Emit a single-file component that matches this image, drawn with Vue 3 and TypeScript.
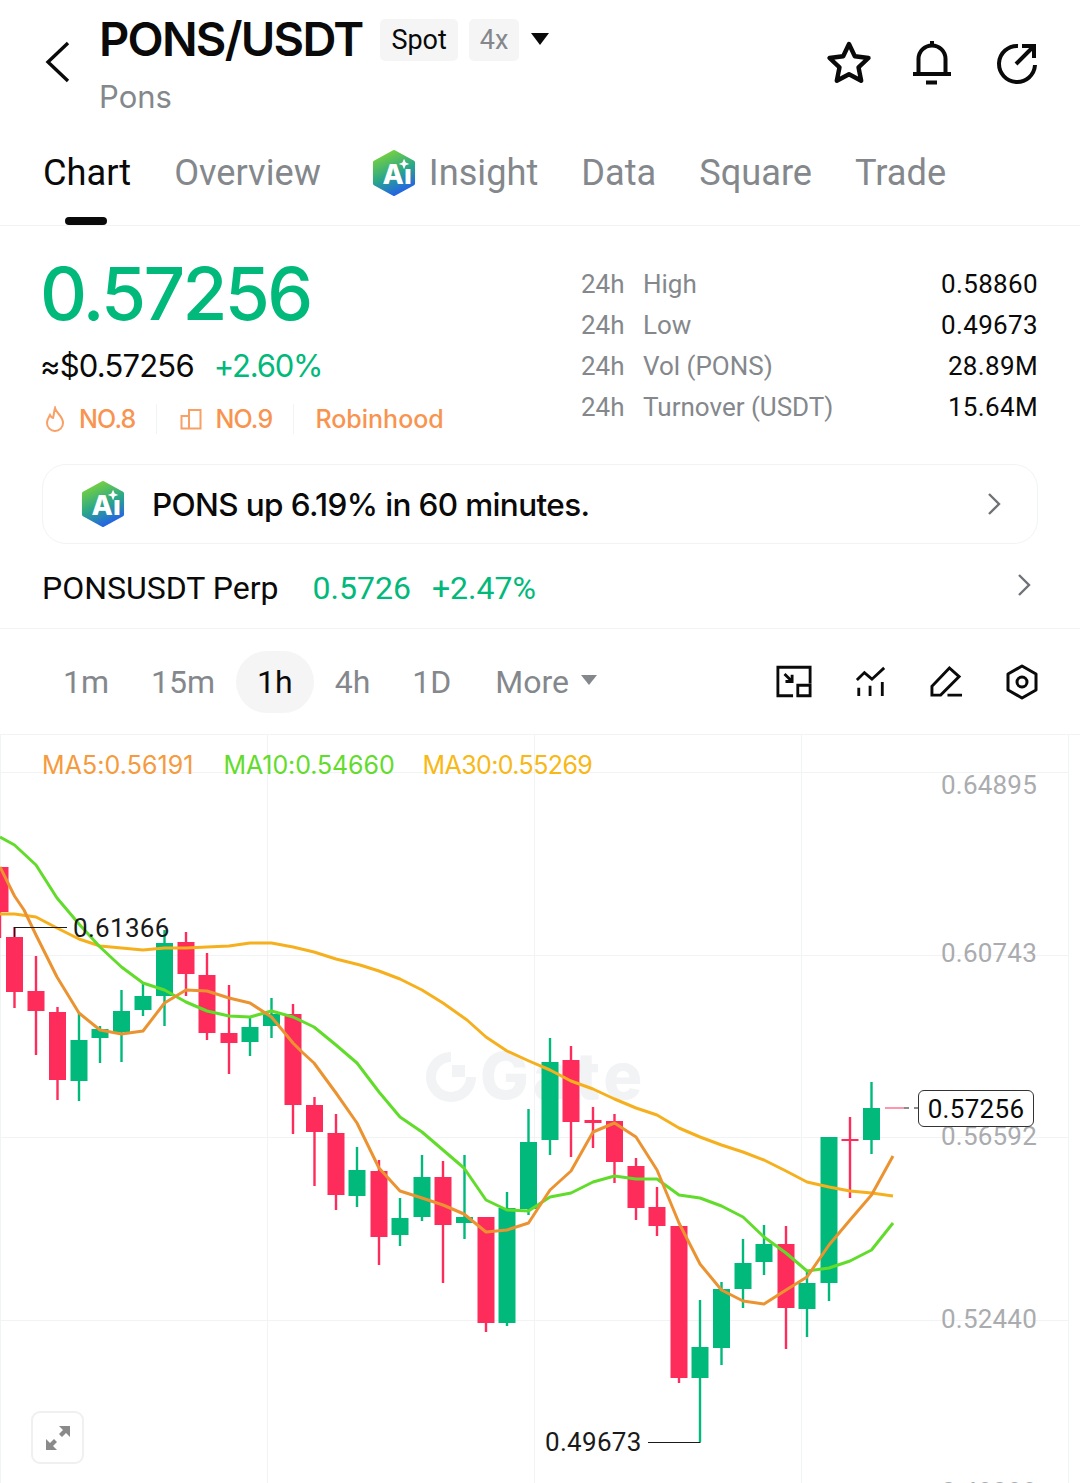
<script setup lang="ts">
type Candle = [number, number, number, number, number, 'r' | 'g']

const tabs = ['Overview', 'Insight', 'Data', 'Square', 'Trade']
const stats = [
  ['High', '0.58860'],
  ['Low', '0.49673'],
  ['Vol (PONS)', '28.89M'],
  ['Turnover (USDT)', '15.64M'],
]
const frames = ['1m', '15m', '1h', '4h', '1D']

// x, wick top, wick bottom, body top, body bottom, colour
const candles: Candle[] = [
  [0, 867, 938, 867, 912, 'r'],
  [14.5, 927, 1008, 937, 992, 'r'],
  [36, 956, 1055, 991, 1011, 'r'],
  [57.5, 1007, 1100, 1012, 1080, 'r'],
  [79, 1013, 1101, 1040, 1081, 'g'],
  [100, 1026, 1063, 1029, 1038, 'g'],
  [121.5, 990, 1062, 1011, 1032, 'g'],
  [143, 983, 1016, 996, 1010, 'g'],
  [164.5, 930, 1026, 943, 996, 'g'],
  [186, 932, 996, 942, 974, 'r'],
  [207, 953, 1040, 975, 1033, 'r'],
  [229, 985, 1074, 1033, 1043, 'r'],
  [250, 1017, 1056, 1027, 1042, 'g'],
  [271.5, 998, 1038, 1014, 1026, 'g'],
  [293, 1004, 1134, 1014, 1105, 'r'],
  [314.5, 1097, 1186, 1105, 1132, 'r'],
  [336, 1114, 1210, 1133, 1195, 'r'],
  [357, 1147, 1207, 1170, 1196, 'g'],
  [379, 1160, 1265, 1171, 1237, 'r'],
  [400, 1198, 1246, 1218, 1235, 'g'],
  [422, 1155, 1221, 1177, 1217, 'g'],
  [443, 1161, 1283, 1177, 1225, 'r'],
  [464.5, 1155, 1239, 1217, 1223, 'g'],
  [486, 1217, 1332, 1217, 1323, 'r'],
  [507, 1192, 1326, 1208, 1323, 'g'],
  [528.5, 1109, 1215, 1142, 1209, 'g'],
  [550, 1038, 1155, 1062, 1140, 'g'],
  [571, 1046, 1157, 1060, 1122, 'r'],
  [593, 1107, 1148, 1120, 1123, 'r'],
  [614.5, 1114, 1183, 1121, 1162, 'r'],
  [636, 1158, 1220, 1166, 1208, 'r'],
  [657, 1187, 1236, 1207, 1226, 'r'],
  [679, 1226, 1383, 1226, 1378, 'r'],
  [700, 1300, 1442, 1347, 1378, 'g'],
  [721.5, 1282, 1365, 1289, 1348, 'g'],
  [743, 1239, 1308, 1263, 1289, 'g'],
  [764, 1225, 1275, 1244, 1262, 'g'],
  [786, 1226, 1349, 1244, 1308, 'r'],
  [807, 1270, 1337, 1283, 1309, 'g'],
  [829, 1137, 1301, 1137, 1283, 'g'],
  [850, 1117, 1198, 1139, 1141, 'r'],
  [871.5, 1082, 1154, 1108, 1140, 'g'],
]

const ma5 = '0,867 14.5,896 24,910 36,935 57,977 79,1013 100,1030 121.5,1034 143,1031 164.5,1003 186,990 207,991 229,998 250,1003 271.5,1017 293,1043 302,1052 314,1063 336,1093 357,1123 379,1168 400,1191 422,1198 443,1205 464,1214 486,1232 507,1230 528.5,1223 550,1190 571,1171 593,1132 614.5,1123 636,1137 657,1170 679,1223 700,1264 721.5,1290 743,1301 764,1304 786,1290 807,1277 829,1245 850,1220 871.5,1195 893,1156'
const ma10 = '0,837 14.5,845 36,865 57,898 79,924 100,947 121.5,967 143,983 164.5,990 186,1002 207,1011 229,1016 250,1017 271.5,1011 293,1017 314,1027 336,1045 357,1063 379,1092 400,1117 422,1132 443,1150 464,1168 486,1200 507,1210 528.5,1211 550,1197 571,1193 593,1182 614.5,1176 636,1179 657,1179 679,1195 700,1198 721.5,1206 743,1217 764,1237 786,1253 807,1271 829,1268 850,1261 871.5,1250 893,1223'
const ma30 = '0,914 14.5,914 36,917 57,928 79,939 100,946 121.5,948 143,950 164.5,948 186,948 207,947 229,946 250,943 271.5,943 293,947 314,952 336,959 360,965 379,971 400,979 422,990 443,1003 467,1020 486,1037 507,1051 529,1061 550,1070 571,1081 593,1089 614.5,1099 636,1108 657,1115 679,1128 700,1137 721.5,1145 743,1152 764,1160 786,1171 807,1182 829,1187 850,1191 871.5,1193 893,1196'

const gridY = [772, 955, 1137, 1320]
const gridX = [0, 267, 534, 801, 1068]
const axis: [string, number][] = [
  ['0.64895', 794],
  ['0.60743', 962],
  ['0.56592', 1145],
  ['0.52440', 1328],
  ['0.48288', 1501],
]
</script>

<template>
  <div class="page">
    <header class="head">
      <svg class="back" width="26" height="42" viewBox="0 0 26 42">
        <path d="M24 2 L4 21 L24 40" fill="none" stroke="#0a0a0a" stroke-width="3.4" />
      </svg>
      <div class="title-col">
        <div class="title-row">
          <span class="pair">PONS/USDT</span>
          <span class="chip">Spot</span>
          <span class="chip chip-grey">4x</span>
          <span class="caret"></span>
        </div>
        <div class="coin">Pons</div>
      </div>
      <div class="head-icons">
        <svg width="46" height="46" viewBox="0 0 46 46">
          <path d="M23 4 L28.8 16.2 L42.5 18 L32.5 27.3 L35.2 40.8 L23 34.2 L10.8 40.8 L13.5 27.3 L3.5 18 L17.2 16.2 Z" fill="none" stroke="#0a0a0a" stroke-width="4.4" stroke-linejoin="round" />
        </svg>
        <svg class="bell" width="40" height="46" viewBox="0 0 40 46">
          <path d="M1 34 H39 M6.5 34 V19 A13.5 13.5 0 0 1 33.5 19 V34 M20 1 V6 M14 42.5 H25" fill="none" stroke="#0a0a0a" stroke-width="4" />
        </svg>
        <svg width="42" height="44" viewBox="0 0 42 44">
          <path d="M22 5 A18 18 0 1 0 39 24 M20 23 L37 6 M26 5 H38 V17" fill="none" stroke="#0a0a0a" stroke-width="4" />
        </svg>
      </div>
    </header>

    <nav class="tabs">
      <span class="tab tab-on">Chart</span>
      <span v-for="t in tabs" :key="t" class="tab" :class="{ 'tab-ai': t === 'Insight' }">
        <svg v-if="t === 'Insight'" class="ai" width="44" height="48" viewBox="0 0 46 50">
          <defs>
            <linearGradient id="aiA" x1="0.2" y1="0" x2="0.6" y2="1">
              <stop offset="0" stop-color="#7bd43a" />
              <stop offset="0.55" stop-color="#2aa68a" />
              <stop offset="1" stop-color="#2463e6" />
            </linearGradient>
          </defs>
          <path d="M23 3 L43 14 V36 L23 47 L3 36 V14 Z" fill="url(#aiA)" stroke="url(#aiA)" stroke-width="4" stroke-linejoin="round" />
          <text x="11" y="36" class="ai-text">Aı</text>
          <path d="M33.500 10 L35.200 14 L39 15.500 L35.200 17 L33.500 21 L31.800 17 L28 15.500 L31.800 14 Z" fill="#fff" />
        </svg>
        {{ t }}
      </span>
    </nav>

    <section class="stats">
      <div class="stats-left">
        <div class="price">0.57256</div>
        <div class="sub-price">
          <span class="usd">≈$0.57256</span>
          <span class="pct">+2.60%</span>
        </div>
        <div class="ranks">
          <span class="rank">
            <svg width="22" height="26" viewBox="0 0 22 26">
              <path d="M11 2 C12 7 19 10 19 17 A8 8 0 0 1 3 17 C3 13 5 11 6 9 C7 11 8 12 9 12 C10 9 10 5 11 2 Z" fill="none" stroke="#f8a066" stroke-width="2" />
            </svg>
            NO.8
          </span>
          <span class="rank">
            <svg width="22" height="22" viewBox="0 0 22 22">
              <path d="M1.500 8 H9 V20.500 H1.500 Z M9 2 H20.500 V20.500 H9 Z" fill="none" stroke="#f8a066" stroke-width="2" />
            </svg>
            NO.9
          </span>
          <span class="rank rank-last">Robinhood</span>
        </div>
      </div>
      <div class="stats-right">
        <div v-for="s in stats" :key="s[0]" class="stat-row">
          <span class="h24">24h</span>
          <span class="stat-name">{{ s[0] }}</span>
          <span class="stat-val">{{ s[1] }}</span>
        </div>
      </div>
    </section>

    <div class="alert">
      <svg width="44" height="48" viewBox="0 0 46 50">
        <defs>
          <linearGradient id="aiB" x1="0.2" y1="0" x2="0.6" y2="1">
            <stop offset="0" stop-color="#7bd43a" />
            <stop offset="0.55" stop-color="#2aa68a" />
            <stop offset="1" stop-color="#2463e6" />
          </linearGradient>
        </defs>
        <path d="M23 3 L43 14 V36 L23 47 L3 36 V14 Z" fill="url(#aiB)" stroke="url(#aiB)" stroke-width="4" stroke-linejoin="round" />
        <text x="11" y="36" class="ai-text">Aı</text>
        <path d="M33.500 10 L35.200 14 L39 15.500 L35.200 17 L33.500 21 L31.800 17 L28 15.500 L31.800 14 Z" fill="#fff" />
      </svg>
      <span class="alert-text">PONS up 6.19% in 60 minutes.</span>
      <svg class="chev" width="14" height="24" viewBox="0 0 14 24">
        <path d="M2 2 L12 12 L2 22" fill="none" stroke="#6f7378" stroke-width="2.400" />
      </svg>
    </div>

    <div class="perp">
      <span class="perp-name">PONSUSDT Perp</span>
      <span class="perp-val">0.5726</span>
      <span class="perp-val">+2.47%</span>
      <svg class="chev perp-chev" width="14" height="24" viewBox="0 0 14 24">
        <path d="M2 2 L12 12 L2 22" fill="none" stroke="#6f7378" stroke-width="2.400" />
      </svg>
    </div>

    <div class="toolbar">
      <div class="frames">
        <span v-for="f in frames" :key="f" class="frame" :class="{ 'frame-on': f === '1h' }">{{ f }}</span>
        <span class="frame frame-more">More<i class="more-caret"></i></span>
      </div>
      <div class="tools">
        <svg width="36" height="33" viewBox="0 0 38 34">
          <path d="M18 32 H2 V2 H36 V19 M9 9 L17 17 M10 17 H17 V10 M23 21 H36 V32 H23 Z" fill="none" stroke="#0a0a0a" stroke-width="3" />
        </svg>
        <svg width="32" height="32" viewBox="0 0 34 34">
          <path d="M2 15 L10 7 L18 14 L31 2 M4 23 V32 M16 21 V32 M29 17 V32" fill="none" stroke="#0a0a0a" stroke-width="3" />
        </svg>
        <svg width="33" height="33" viewBox="0 0 34 34">
          <path d="M2 31 V22 L20 3 L30 12 L11 31 Z M18 31 H33" fill="none" stroke="#0a0a0a" stroke-width="3" />
        </svg>
        <svg width="32" height="36" viewBox="0 0 32 36">
          <path d="M16 2 L30 10 V26 L16 34 L2 26 V10 Z" fill="none" stroke="#0a0a0a" stroke-width="3" stroke-linejoin="round" />
          <circle cx="16" cy="18" r="5" fill="none" stroke="#0a0a0a" stroke-width="3" />
        </svg>
      </div>
    </div>

    <div class="chart">
      <svg class="plot" width="1080" height="748" viewBox="0 735 1080 748">
        <line v-for="y in gridY" :key="'y' + y" x1="0" x2="1068" :y1="y + 0.5" :y2="y + 0.5" stroke="#f2f3f5" />
        <line v-for="x in gridX" :key="'x' + x" :x1="x + 0.5" :x2="x + 0.5" y1="735" y2="1483" stroke="#f2f3f5" />

        <!-- watermark -->
        <path d="M451 1057 A20 20 0 1 0 471 1077" fill="none" stroke="#f1f3f4" stroke-width="10" />
        <rect x="452" y="1065" width="13" height="12" fill="#f1f3f4" />
        <text x="480" y="1099" class="mark">Gate</text>

        <g v-for="(c, i) in candles" :key="i">
          <line :x1="c[0]" :x2="c[0]" :y1="c[1]" :y2="c[2]" :stroke="c[5] === 'r' ? '#fe2c5b' : '#00b97a'" stroke-width="2.400" />
          <rect :x="c[0] - 8.500" :y="c[3]" width="17" :height="c[4] - c[3]" :fill="c[5] === 'r' ? '#fe2c5b' : '#00b97a'" />
        </g>

        <polyline :points="ma30" fill="none" stroke="#f6b01e" stroke-width="3" stroke-linejoin="round" />
        <polyline :points="ma10" fill="none" stroke="#62dc2b" stroke-width="3" stroke-linejoin="round" />
        <polyline :points="ma5" fill="none" stroke="#ec9331" stroke-width="3" stroke-linejoin="round" />

        <path d="M14.500 937 V927.500 H67" fill="none" stroke="#1a1a1a" stroke-width="1.200" />
        <text x="73" y="937" class="extreme">0.61366</text>
        <path d="M700.500 1442.500 H648" fill="none" stroke="#1a1a1a" stroke-width="1.200" />
        <text x="545" y="1451" class="extreme">0.49673</text>

        <text v-for="a in axis" :key="a[0]" x="1037" :y="a[1]" text-anchor="end" class="axis">{{ a[0] }}</text>

        <line x1="885" x2="904" y1="1108" y2="1108" stroke="#fe2c5b" stroke-width="1" />
        <line x1="904" x2="918" y1="1108" y2="1108" stroke="#1a1a1a" stroke-width="1.200" stroke-dasharray="5 5" />
      </svg>

      <div class="legend">
        <span class="ma5">MA5:0.56191</span>
        <span class="ma10">MA10:0.54660</span>
        <span class="ma30">MA30:0.55269</span>
      </div>

      <div class="last-price">0.57256</div>

      <div class="expand">
        <svg width="26" height="26" viewBox="0 0 26 26">
          <path d="M14 1 H25 V12 L21 8 L17 12 L14 9 L18 5 Z M12 25 H1 V14 L5 18 L9 14 L12 17 L8 21 Z" fill="#8a8a8a" />
        </svg>
      </div>
    </div>
  </div>
</template>

<style>
html,
body {
  margin: 0;
  background: #fff;
}
</style>

<style scoped>
.page {
  width: 1080px;
  height: 1483px;
  overflow: hidden;
  background: #fff;
  color: #0a0a0a;
  font-family: Roboto, sans-serif;
}

.head {
  display: flex;
  height: 125px;
  box-sizing: border-box;
  padding: 15px 42px 0 44px;
}

.back {
  margin: 26px 29px 0 0;
}

.title-col {
  flex: 1;
}

.title-row {
  display: flex;
  align-items: center;
  height: 50px;
}

.pair {
  font-family: Inter, sans-serif;
  font-size: 47px;
  font-weight: 600;
  letter-spacing: -1.75px;
  margin: 0 18px 3px 0;
}

.chip {
  background: #f5f5f6;
  border-radius: 5px;
  font-size: 27px;
  line-height: 42px;
  padding: 0 11px;
  margin-right: 11px;
}

.chip-grey {
  color: #84888c;
}

.caret {
  width: 0;
  height: 0;
  margin: 0 0 3px 1px;
  border-left: 9px solid transparent;
  border-right: 9px solid transparent;
  border-top: 12px solid #0a0a0a;
}

.coin {
  font-family: Inter, sans-serif;
  font-size: 31px;
  color: #84888c;
  margin-top: 13px;
}

.head-icons {
  display: flex;
  gap: 42px;
  align-items: center;
  height: 46px;
  margin-top: 25px;
}

.bell {
  margin: 0 2px 0 -2px;
}

.tabs {
  display: flex;
  align-items: center;
  gap: 43px;
  height: 101px;
  box-sizing: border-box;
  padding: 0 0 5px 43px;
  border-bottom: 1px solid #f2f3f5;
  position: relative;
}

.tab {
  font-size: 36.200px;
  color: #84888c;
  display: flex;
  align-items: center;
}

.tab-on {
  color: #0a0a0a;
}

.tab-on::after {
  content: '';
  position: absolute;
  left: 65px;
  bottom: 0;
  width: 42px;
  height: 8px;
  border-radius: 4px;
  background: #0a0a0a;
}

.ai {
  margin: 0 13px 0 8px;
}

.ai-text {
  font-family: Inter, sans-serif;
  font-size: 29px;
  font-weight: 800;
  fill: #fff;
}

.stats {
  display: flex;
  height: 238px;
  box-sizing: border-box;
  padding: 38px 42px 0;
  justify-content: space-between;
}

.price {
  font-family: Inter, sans-serif;
  font-size: 73px;
  font-weight: 500;
  letter-spacing: -2.700px;
  line-height: 60px;
  margin-left: -2px;
  color: #00b97a;
}

.sub-price {
  display: flex;
  gap: 20px;
  margin: 22px 0 0 -2px;
  font-family: Inter, sans-serif;
  font-size: 31px;
  letter-spacing: -0.8px;
  line-height: 40px;
}

.pct {
  color: #00b97a;
  letter-spacing: -1.2px;
}

.ranks {
  display: flex;
  margin-top: 18px;
  font-family: Inter, sans-serif;
  font-size: 25px;
  font-weight: 500;
  color: #f8944f;
  letter-spacing: -0.8px;
  line-height: 30px;
}

.rank {
  display: flex;
  align-items: center;
  gap: 13px;
  padding: 0 21px 0 2px;
  margin-right: 21px;
  border-right: 1px solid #f2f3f5;
}

.rank-last {
  border-right: none;
  padding: 0;
  margin: 0;
  letter-spacing: 0;
}

.stats-right {
  width: 457px;
}

.stat-row {
  display: flex;
  font-size: 26px;
  line-height: 41px;
  color: #84888c;
}

.h24 {
  width: 62px;
}

.stat-name {
  flex: 1;
}

.stat-val {
  color: #0a0a0a;
  letter-spacing: 0.35px;
}

.alert {
  display: flex;
  align-items: center;
  height: 80px;
  box-sizing: border-box;
  margin: 0 42px;
  padding: 0 36px 0 38px;
  border: 1px solid #f2f3f5;
  border-radius: 24px;
}

.alert-text {
  flex: 1;
  margin-left: 27px;
  font-family: Inter, sans-serif;
  font-size: 31.500px;
  font-weight: 500;
  letter-spacing: -0.63px;
}

.perp {
  display: flex;
  align-items: center;
  height: 85px;
  box-sizing: border-box;
  padding: 4px 49px 0 42px;
  border-bottom: 1px solid #f2f3f5;
  font-size: 32px;
}

.perp-name {
  margin-right: 34px;
}

.perp-val {
  color: #00b97a;
  margin-right: 21px;
}

.perp-chev {
  margin-left: auto;
  margin-top: -6px;
}

.toolbar {
  display: flex;
  align-items: center;
  justify-content: space-between;
  height: 106px;
  box-sizing: border-box;
  padding: 0 42px;
  border-bottom: 1px solid #f2f3f5;
}

.frames {
  display: flex;
  align-items: center;
}

.frame {
  font-size: 32px;
  color: #84888c;
  padding: 0 21px;
  line-height: 62px;
}

.frame-on {
  color: #0a0a0a;
  background: #f5f5f6;
  border-radius: 31px;
}

.frame-more {
  display: flex;
  align-items: center;
  margin-left: 2px;
}

.more-caret {
  margin-left: 12px;
  width: 0;
  height: 0;
  border-left: 8px solid transparent;
  border-right: 8px solid transparent;
  border-top: 10px solid #84888c;
  margin-bottom: 4px;
}

.tools {
  display: flex;
  align-items: center;
  gap: 43px;
}

.chart {
  position: relative;
  height: 748px;
  overflow: hidden;
}

.plot {
  display: block;
}

.plot text {
  font-family: Roboto, sans-serif;
}

.plot .mark {
  font-family: Inter, sans-serif;
}

.mark {
  font-size: 65px;
  font-weight: 800;
  letter-spacing: 4px;
  fill: #f1f3f4;
}

.extreme {
  font-size: 26px;
  fill: #1a1a1a;
  letter-spacing: 0.3px;
}

.axis {
  font-size: 26px;
  fill: #aaacaf;
  letter-spacing: 0.2px;
}

.legend {
  position: absolute;
  left: 42px;
  top: 14px;
  display: flex;
  gap: 30px;
  font-family: Inter, sans-serif;
  font-size: 25px;
  line-height: 32px;
}

.ma5 {
  color: #f59b3d;
  letter-spacing: 0.07px;
}

.ma10 {
  color: #62dc2b;
  letter-spacing: -0.1px;
}

.ma30 {
  color: #f8b816;
  letter-spacing: -0.6px;
  margin-left: -2px;
}

.last-price {
  position: absolute;
  left: 918px;
  top: 355px;
  width: 116px;
  height: 37px;
  box-sizing: border-box;
  border: 1px solid #333;
  border-radius: 6px;
  background: #fff;
  font-size: 26px;
  line-height: 36px;
  text-align: center;
  letter-spacing: 0.3px;
  color: #0a0a0a;
}

.expand {
  position: absolute;
  left: 31px;
  top: 676px;
  width: 53px;
  height: 53px;
  box-sizing: border-box;
  border: 2px solid #f0f0f1;
  border-radius: 9px;
  background: #fff;
  display: flex;
  align-items: center;
  justify-content: center;
}
</style>
